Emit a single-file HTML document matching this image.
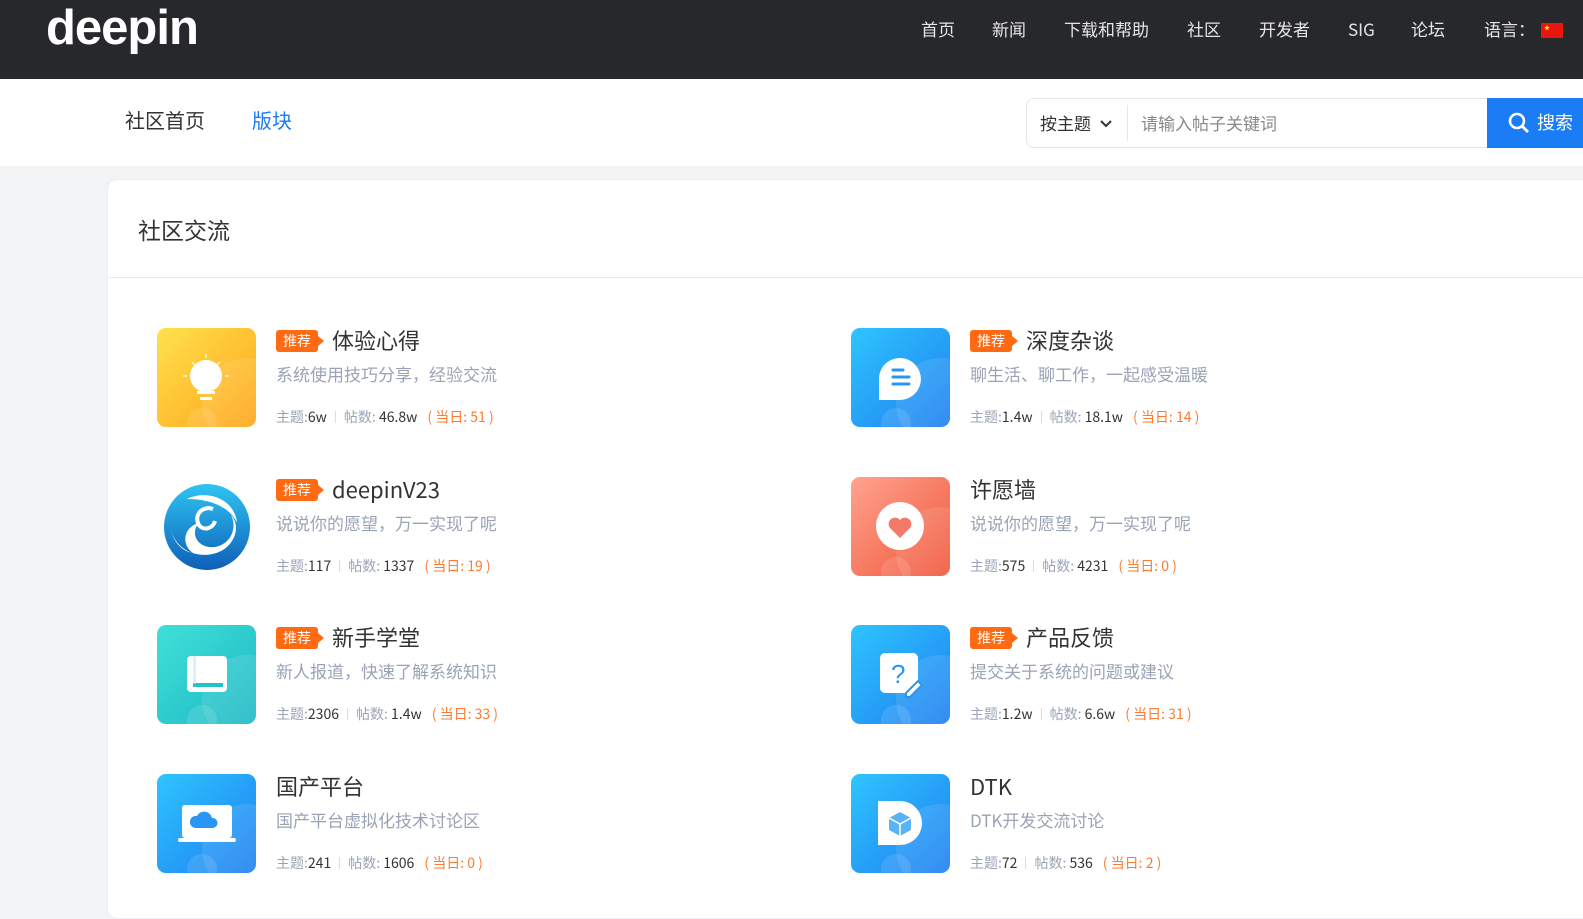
<!DOCTYPE html>
<html><head><meta charset="utf-8"><style>
*{margin:0;padding:0;box-sizing:border-box}
body{width:1583px;height:902px;overflow:hidden;background:#f3f4f6;font-family:"Noto Sans CJK SC","Liberation Sans",sans-serif;position:relative}
.hd{position:absolute;left:0;top:0;width:1583px;height:79px;background:#27282b}
.logo{position:absolute;left:46px;top:4px;line-height:48px;color:#fff;font-size:49px;font-weight:bold;letter-spacing:-1px;font-family:"Liberation Sans",sans-serif}
.nav{position:absolute;top:16px;line-height:26px;color:#e5e5e5;font-size:17px}
.sub{position:absolute;left:0;top:79px;width:1583px;height:87px;background:#fff}
.sub .t{position:absolute;top:26px;line-height:30px;font-size:20px;color:#333}
.search{position:absolute;left:1026px;top:98px;width:470px;height:50px;border:1px solid #e6e6e6;border-radius:8px 0 0 8px;background:#fff}
.btn{position:absolute;left:1487px;top:98px;width:96px;height:50px;background:#1a7df5;color:#fff;font-size:18px}
.card{position:absolute;left:107px;top:179px;width:1490px;height:740px;background:#fff;border-radius:10px;border:1px solid #eceef2}
.ct{position:absolute;left:30px;top:32px;line-height:34px;font-size:23px;color:#333}
.line{position:absolute;left:0;top:97px;width:100%;height:1px;background:#e8eaee}
.it{position:absolute;width:600px;height:100px}
.ic{position:absolute;left:0;top:0;width:99px;height:99px;border-radius:9px;overflow:hidden}
.ic:after{content:"";position:absolute;left:45px;top:30px;width:90px;height:90px;border-radius:50%;background:rgba(255,255,255,.1)}
.ic:before{content:"";position:absolute;left:30px;top:80px;width:30px;height:30px;border-radius:50%;background:rgba(255,255,255,.12)}
.tt{position:absolute;left:119px;top:-4px;line-height:32px;font-size:22px;color:#333;white-space:nowrap}
.tag{display:inline-block;background:#ff6a13;color:#fff;font-size:14px;padding:0 7px;height:22px;line-height:22px;border-radius:3px;margin-right:14px;vertical-align:3px;position:relative}
.tag:after{content:"";position:absolute;right:-6px;top:6px;border-left:6px solid #ff6a13;border-top:5px solid transparent;border-bottom:5px solid transparent}
.ds{position:absolute;left:119px;top:33px;line-height:26px;font-size:17px;color:#9aa3b5;white-space:nowrap}
.st{position:absolute;left:119px;top:79px;line-height:20px;font-size:14px;color:#9aa3b5;white-space:nowrap}
.st b{font-weight:normal;color:#333}
.st i{font-style:normal;display:inline-block;width:1px;height:12px;background:#ddd;margin:0 8px;vertical-align:-1px}
.st em{font-style:normal;color:#ff7a2e;margin-left:10px}
.blue{background:linear-gradient(135deg,#2ec5ff,#1f7ff0)}
</style></head><body>
<div class="hd">
<div class="logo">deepin</div>
<span class="nav" style="left:921px">首页</span>
<span class="nav" style="left:992px">新闻</span>
<span class="nav" style="left:1064px">下载和帮助</span>
<span class="nav" style="left:1187px">社区</span>
<span class="nav" style="left:1259px">开发者</span>
<span class="nav" style="left:1348px">SIG</span>
<span class="nav" style="left:1411px">论坛</span>
<span class="nav" style="left:1484px">语言：</span>
<div style="position:absolute;left:1541px;top:23px;width:22px;height:15px;background:#e8160c"><span style="position:absolute;left:3px;top:0px;color:#ff0;font-size:6px">★</span></div>
</div>
<div class="sub">
<span class="t" style="left:125px">社区首页</span>
<span class="t" style="left:252px;color:#1a7df5">版块</span>
</div>
<div class="search">
<span style="position:absolute;left:13px;top:11px;line-height:26px;font-size:17px;color:#333">按主题</span>
<svg style="position:absolute;left:73px;top:21px" width="12" height="8" viewBox="0 0 12 8"><path d="M1 1l5 5 5-5" stroke="#333" stroke-width="2" fill="none"/></svg>
<div style="position:absolute;left:100px;top:6px;width:1px;height:36px;background:#e6e6e6"></div>
<span style="position:absolute;left:114px;top:11px;line-height:26px;font-size:17px;color:#888">请输入帖子关键词</span>
</div>
<div class="btn">
<svg style="position:absolute;left:21px;top:14px" width="22" height="22" viewBox="0 0 22 22"><circle cx="9" cy="9" r="7" stroke="#fff" stroke-width="2.6" fill="none"/><path d="M14 14l6 6" stroke="#fff" stroke-width="2.8"/></svg>
<span style="position:absolute;left:50px;top:11px;line-height:26px">搜索</span>
</div>
<div class="card">
<div class="ct">社区交流</div>
<div class="line"></div>

<div class="it" style="left:49px;top:148px">
<div class="ic" style="background:linear-gradient(135deg,#ffe14d,#ffa51a)"><svg width="99" height="99" style="position:relative;z-index:1"><circle cx="49" cy="48" r="16" fill="#fff"/><rect x="40" y="63" width="18" height="3" fill="#fff"/><rect x="43" y="69" width="12" height="3" fill="#fff"/><path d="M49 26v4M30 48h-4M72 48h-4M35 34l3 3M63 34l-3 3" stroke="#fff" stroke-opacity=".6" stroke-width="2"/></svg></div>
<div class="tt"><span class="tag">推荐</span>体验心得</div>
<div class="ds">系统使用技巧分享，经验交流</div>
<div class="st">主题:<b>6w</b><i></i>帖数: <b>46.8w</b><em>( 当日: 51 )</em></div>
</div>

<div class="it" style="left:743px;top:148px">
<div class="ic blue"><svg width="99" height="99" style="position:relative;z-index:1"><path d="M28 72V49a21 21 0 1 1 21 23z" fill="#fff"/><path d="M42 42h10M42 49h16M42 56h16" stroke="#2b95f5" stroke-width="3" stroke-linecap="round"/></svg></div>
<div class="tt"><span class="tag">推荐</span>深度杂谈</div>
<div class="ds">聊生活、聊工作，一起感受温暖</div>
<div class="st">主题:<b>1.4w</b><i></i>帖数: <b>18.1w</b><em>( 当日: 14 )</em></div>
</div>

<div class="it" style="left:49px;top:297px">
<div class="ic" style="background:#fff"><svg width="99" height="99" style="position:relative;z-index:1"><defs><linearGradient id="g1" x1="0" y1="0" x2="0" y2="1"><stop offset="0" stop-color="#2fc4f2"/><stop offset="1" stop-color="#0e5fb8"/></linearGradient></defs><circle cx="50" cy="50" r="43" fill="url(#g1)"/><path d="M14 52c4 22 30 32 50 22 14-7 20-25 10-36 8 16-4 34-22 32-14-2-18-16-10-24-16 4-18 22-6 30-12-2-20-12-22-24z" fill="#fff"/><path d="M30 22c20-10 48 0 50 24-8-18-30-24-50-24z" fill="#fff"/><path d="M56 32c-10-4-20 6-14 16 4 6 14 4 16-4" fill="none" stroke="#fff" stroke-width="4"/></svg></div>
<div class="tt"><span class="tag">推荐</span>deepinV23</div>
<div class="ds">说说你的愿望，万一实现了呢</div>
<div class="st">主题:<b>117</b><i></i>帖数: <b>1337</b><em>( 当日: 19 )</em></div>
</div>

<div class="it" style="left:743px;top:297px">
<div class="ic" style="background:linear-gradient(135deg,#ffa38f,#f0573a)"><svg width="99" height="99" style="position:relative;z-index:1"><circle cx="49" cy="49" r="24" fill="#fff"/><path d="M49 61l-10-10a6 6 0 0 1 10-8 6 6 0 0 1 10 8z" fill="#f37a68"/></svg></div>
<div class="tt">许愿墙</div>
<div class="ds">说说你的愿望，万一实现了呢</div>
<div class="st">主题:<b>575</b><i></i>帖数: <b>4231</b><em>( 当日: 0 )</em></div>
</div>

<div class="it" style="left:49px;top:445px">
<div class="ic" style="background:linear-gradient(135deg,#3fe0d8,#1fb8c5)"><svg width="99" height="99" style="position:relative;z-index:1"><rect x="30" y="31" width="40" height="36" rx="4" fill="#fff"/><rect x="36" y="58" width="30" height="4" fill="#26c2cc"/><rect x="36" y="31" width="3" height="28" fill="#bdf" opacity=".5"/></svg></div>
<div class="tt"><span class="tag">推荐</span>新手学堂</div>
<div class="ds">新人报道，快速了解系统知识</div>
<div class="st">主题:<b>2306</b><i></i>帖数: <b>1.4w</b><em>( 当日: 33 )</em></div>
</div>

<div class="it" style="left:743px;top:445px">
<div class="ic blue"><svg width="99" height="99" style="position:relative;z-index:1"><rect x="29" y="28" width="38" height="40" rx="5" fill="#fff"/><text x="40" y="58" font-size="26" fill="#2b95f5" font-family="Liberation Sans">?</text><path d="M55 68l12-12 4 4-12 12h-4z" fill="#fff" stroke="#2b95f5" stroke-width="2"/></svg></div>
<div class="tt"><span class="tag">推荐</span>产品反馈</div>
<div class="ds">提交关于系统的问题或建议</div>
<div class="st">主题:<b>1.2w</b><i></i>帖数: <b>6.6w</b><em>( 当日: 31 )</em></div>
</div>

<div class="it" style="left:49px;top:594px">
<div class="ic blue"><svg width="99" height="99" style="position:relative;z-index:1"><rect x="25" y="31" width="50" height="33" rx="3" fill="#fff"/><rect x="21" y="64" width="58" height="4" rx="2" fill="#fff"/><path d="M38 54a6 6 0 0 1 2-12 8 8 0 0 1 15 2 5 5 0 0 1 1 10z" fill="#2b95f5"/></svg></div>
<div class="tt">国产平台</div>
<div class="ds">国产平台虚拟化技术讨论区</div>
<div class="st">主题:<b>241</b><i></i>帖数: <b>1606</b><em>( 当日: 0 )</em></div>
</div>

<div class="it" style="left:743px;top:594px">
<div class="ic blue"><svg width="99" height="99" style="position:relative;z-index:1"><path d="M27 27h22a22 22 0 0 1 0 44H27z" fill="#fff"/><path d="M49 38l11 6v12l-11 6-11-6V44z" fill="#5ab3f5"/><path d="M38 44l11 6 11-6M49 50v12" stroke="#fff" stroke-width="1.5" fill="none"/></svg></div>
<div class="tt">DTK</div>
<div class="ds">DTK开发交流讨论</div>
<div class="st">主题:<b>72</b><i></i>帖数: <b>536</b><em>( 当日: 2 )</em></div>
</div>
</div>
</body></html>
